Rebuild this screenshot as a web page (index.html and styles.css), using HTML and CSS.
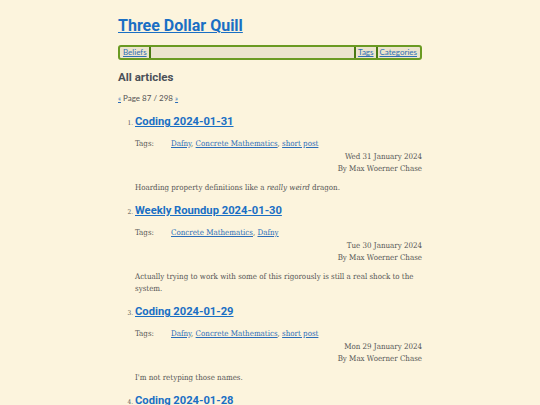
FILE: index.html
```html
<!DOCTYPE html>
<html>
<head>
<meta charset="utf-8">
<link rel="stylesheet" href="styles.css">
</head>
<body>
<div class="page">
  <header class="site-header">
    <h1 class="site-title"><a href="#">Three Dollar Quill</a></h1>
    <nav class="nav">
      <a href="#" class="nav-link sep-right">Beliefs</a>
      <span class="nav-fill"></span>
      <a href="#" class="nav-link sep-left">Tags</a>
      <a href="#" class="nav-link sep-left">Categories</a>
    </nav>
  </header>
  <main>
    <h2 class="section-title">All articles</h2>
    <p class="pager"><a href="#">«</a> Page 87 / 298 <a href="#">»</a></p>
    <ol class="articles" start="1">
      <li class="article">
        <h3 class="article-title"><a href="#">Coding 2024-01-31</a></h3>
        <div class="tags"><span class="tags-label">Tags:</span><span class="tags-list"><a href="#">Dafny</a>, <a href="#">Concrete Mathematics</a>, <a href="#">short post</a></span></div>
        <div class="meta">
          <div>Wed 31 January 2024</div>
          <div>By Max Woerner Chase</div>
        </div>
        <p class="summary">Hoarding property definitions like a <em>really weird</em> dragon.</p>
      </li>
      <li class="article">
        <h3 class="article-title"><a href="#">Weekly Roundup 2024-01-30</a></h3>
        <div class="tags"><span class="tags-label">Tags:</span><span class="tags-list"><a href="#">Concrete Mathematics</a>, <a href="#">Dafny</a></span></div>
        <div class="meta">
          <div>Tue 30 January 2024</div>
          <div>By Max Woerner Chase</div>
        </div>
        <p class="summary">Actually trying to work with some of this rigorously is still a real shock to the system.</p>
      </li>
      <li class="article">
        <h3 class="article-title"><a href="#">Coding 2024-01-29</a></h3>
        <div class="tags"><span class="tags-label">Tags:</span><span class="tags-list"><a href="#">Dafny</a>, <a href="#">Concrete Mathematics</a>, <a href="#">short post</a></span></div>
        <div class="meta">
          <div>Mon 29 January 2024</div>
          <div>By Max Woerner Chase</div>
        </div>
        <p class="summary">I'm not retyping those names.</p>
      </li>
      <li class="article">
        <h3 class="article-title"><a href="#">Coding 2024-01-28</a></h3>
        <div class="tags"><span class="tags-label">Tags:</span><span class="tags-list"><a href="#">Dafny</a></span></div>
      </li>
    </ol>
  </main>
</div>
</body>
</html>
```
FILE: styles.css
```css
html, body {
  margin: 0;
  padding: 0;
  background: #fcf4dd;
}
body {
  font-family: "DejaVu Serif Condensed", "Liberation Serif", serif;
  color: #555555;
  font-size: 7.9px;
  line-height: 12px;
}
.page {
  width: 304px;
  margin: 0 auto;
  padding-top: 15px;
}
a { color: #2a6cb8; }
.site-title {
  margin: 0;
  font-family: Roboto, Lato, sans-serif;
  font-weight: 700;
  font-size: 16px;
  line-height: 22px;
}
.site-title a { color: #1a6fc4; }
.nav {
  margin-top: 8px;
  display: flex;
  align-items: stretch;
  border: 2px solid #6a9a22;
  border-radius: 3px;
  background: #ece4cd;
  height: 11px;
  padding: 0 1px;
  font-family: Lato, "Open Sans", sans-serif;
  font-size: 8px;
  line-height: 11px;
}
.nav-link { color: #2f6fb3; padding: 0 2px; }
.sep-right { border-right: 2px solid #4a7a12; }
.sep-left { border-left: 2px solid #4a7a12; }
.nav-fill { flex: 1; }
.section-title {
  margin: 9px 0 0;
  font-family: Roboto, Lato, sans-serif;
  font-size: 11.5px;
  line-height: 16px;
  font-weight: 700;
  color: #4a5058;
}
.pager {
  margin: 8px 0 0;
  font-family: Lato, "Open Sans", sans-serif;
  font-size: 8px;
  line-height: 10px;
}
.pager a { font-size: 7px; }
.articles {
  margin: 0;
  padding: 0 0 0 17px;
}
.article {
  margin-top: 9px;
  font-size: 6.5px;
}
.article:first-child { margin-top: 11px; }
.article-title {
  margin: 0;
  font-family: Roboto, Lato, sans-serif;
  font-size: 11.2px;
  line-height: 16px;
  font-weight: 700;
}
.article-title a { color: #1a6fc4; }
.tags, .meta, .summary { font-size: 7.9px; }
.tags {
  margin-top: 8px;
  display: flex;
}
.tags-label { width: 36px; }
.meta {
  margin-top: 1px;
  text-align: right;
}
.summary {
  margin: 7px 0 0;
}
```
